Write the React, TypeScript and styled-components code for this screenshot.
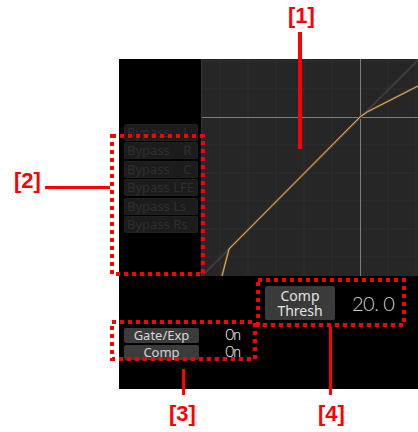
import React from 'react'
import styled, { createGlobalStyle } from 'styled-components'

const GlobalStyle = createGlobalStyle`
  body {
    margin: 0;
    background: #ffffff;
    font-family: "Noto Sans", "DejaVu Sans", sans-serif;
  }
`

const bypassLabels = ['Bypass    L', 'Bypass    R', 'Bypass    C', 'Bypass LFE', 'Bypass Ls', 'Bypass Rs']

// grid spacing is anchored on the crosshair
const crossX = 158
const crossY = 58
const gridXs = [-5, -4, -3, -2, -1, 1, 2].map((k) => crossX + k * 28)
const gridYs = [-2, -1, 1, 2, 3, 4, 5].map((k) => crossY + k * 28)
const curve = '20,217 27,190 158,58 165,53 216,27'

export default function App() {
  return (
    <Page>
      <GlobalStyle />
      <Panel>
        <TopRow>
          <BypassColumn>
            {bypassLabels.map((label) => (
              <BypassButton key={label}>{label}</BypassButton>
            ))}
          </BypassColumn>
          <Graph>
            <svg width="216" height="217" viewBox="0 0 216 217">
              {gridXs.map((x) => (
                <line key={'x' + x} x1={x} y1={0} x2={x} y2={217} stroke="#2f2f2f" strokeWidth="1" />
              ))}
              {gridYs.map((y) => (
                <line key={'y' + y} x1={0} y1={y} x2={216} y2={y} stroke="#2f2f2f" strokeWidth="1" />
              ))}
              <line x1={crossX + 0.5} y1={0} x2={crossX + 0.5} y2={217} stroke="#7e7e7e" strokeWidth="1" />
              <line x1={0} y1={crossY + 0.5} x2={216} y2={crossY + 0.5} stroke="#7e7e7e" strokeWidth="1" />
              <line x1={0} y1={217} x2={216} y2={1} stroke="#3c3c3c" strokeWidth="2" />
              <polyline points={curve} fill="none" stroke="#6e4b25" strokeWidth="2.2" strokeLinejoin="round" />
              <polyline points={curve} fill="none" stroke="#e6bb7c" strokeWidth="0.9" strokeLinejoin="round" />
            </svg>
          </Graph>
        </TopRow>

        <ThreshRow>
          <ThreshButton>
            Comp
            <br />
            Thresh
          </ThreshButton>
          <ThreshValue>20. 0</ThreshValue>
        </ThreshRow>

        <ToggleList>
          <ToggleRow>
            <ToggleButton>Gate/Exp</ToggleButton>
            <ToggleState>On</ToggleState>
          </ToggleRow>
          <ToggleRow>
            <ToggleButton>Comp</ToggleButton>
            <ToggleState>On</ToggleState>
          </ToggleRow>
        </ToggleList>
      </Panel>

      {/* red callouts drawn over the screenshot */}
      <CalloutLabel $x={288} $y={5}>[1]</CalloutLabel>
      <CalloutLabel $x={14} $y={170}>[2]</CalloutLabel>
      <CalloutLabel $x={169} $y={403}>[3]</CalloutLabel>
      <CalloutLabel $x={318} $y={403}>[4]</CalloutLabel>

      <CalloutLine $x={298} $y={32} $w={4} $h={117} />
      <CalloutLine $x={45} $y={186} $w={65} $h={3} />
      <CalloutLine $x={182} $y={369} $w={3} $h={26} />
      <CalloutLine $x={329} $y={327} $w={3} $h={68} />

      <DottedBox $x={110} $y={134} $w={95} $h={142} />
      <DottedBox $x={110} $y={320} $w={147} $h={41} />
      <DottedBox $x={256} $y={278} $w={150} $h={49} />
    </Page>
  )
}

function DottedBox({ $x, $y, $w, $h }: { $x: number, $y: number, $w: number, $h: number }) {
  return (
    <BoxFrame $x={$x} $y={$y} $w={$w} $h={$h}>
      <svg width={$w} height={$h}>
        <rect
          x={2}
          y={2}
          width={$w - 4}
          height={$h - 4}
          fill="none"
          stroke="#ff0000"
          strokeWidth="4"
          strokeDasharray="4 4"
        />
      </svg>
    </BoxFrame>
  )
}

const Page = styled.div`
  position: relative;
  width: 418px;
  height: 432px;
  box-sizing: border-box;
  padding: 59px 0 0 119px;
  overflow: hidden;
`

const Panel = styled.div`
  width: 299px;
  height: 330px;
  background: #000000;
  display: flex;
  flex-direction: column;
`

const TopRow = styled.div`
  display: flex;
  height: 217px;
`

const BypassColumn = styled.div`
  width: 83px;
  box-sizing: border-box;
  padding: 65px 0 0 5px;
  display: flex;
  flex-direction: column;
  gap: 1.4px;
`

const BypassButton = styled.div`
  width: 74px;
  height: 17px;
  box-sizing: border-box;
  padding-left: 2px;
  background: #1c1c1c;
  border: 1px solid #212121;
  border-radius: 2px;
  color: #2f2f2f;
  font-size: 13px;
  line-height: 15px;
  white-space: pre;
  overflow: hidden;
`

const Graph = styled.div`
  width: 216px;
  height: 217px;
  background: #262626;
  border-left: 1px solid #333333;
  svg {
    display: block;
  }
`

const ThreshRow = styled.div`
  display: flex;
  align-items: center;
  gap: 17px;
  padding-left: 146px;
  margin-top: 10px;
`

const ThreshButton = styled.div`
  width: 70px;
  height: 34px;
  background: #3a3a3a;
  border-radius: 2px;
  color: #e2e2e2;
  font-size: 14px;
  line-height: 15px;
  text-align: center;
  display: flex;
  align-items: center;
  justify-content: center;
`

const ThreshValue = styled.div`
  color: #d0d0d0;
  font-family: "Lato", "Noto Sans", sans-serif;
  font-weight: 300;
  font-size: 20px;
  letter-spacing: -0.5px;
`

const ToggleList = styled.div`
  display: flex;
  flex-direction: column;
  gap: 2px;
  padding-left: 5px;
  margin-top: 8px;
`

const ToggleRow = styled.div`
  display: flex;
  align-items: center;
  gap: 26px;
`

const ToggleButton = styled.div`
  width: 75px;
  height: 15px;
  background: #3c3c3c;
  border-radius: 2px;
  color: #d6d6d6;
  font-size: 13px;
  line-height: 15px;
  text-align: center;
`

const ToggleState = styled.div`
  color: #eeeeee;
  font-family: "Roboto", sans-serif;
  font-weight: 300;
  font-size: 14px;
  line-height: 15px;
  letter-spacing: -1.2px;
`

const CalloutLabel = styled.div<{ $x: number, $y: number }>`
  position: absolute;
  left: ${(p) => p.$x}px;
  top: ${(p) => p.$y}px;
  color: #ff0000;
  font-family: "Liberation Sans", Arial, sans-serif;
  font-weight: bold;
  font-size: 22px;
  line-height: 22px;
`

const CalloutLine = styled.div<{ $x: number, $y: number, $w: number, $h: number }>`
  position: absolute;
  left: ${(p) => p.$x}px;
  top: ${(p) => p.$y}px;
  width: ${(p) => p.$w}px;
  height: ${(p) => p.$h}px;
  background: #ff0000;
`

const BoxFrame = styled.div<{ $x: number, $y: number, $w: number, $h: number }>`
  position: absolute;
  left: ${(p) => p.$x}px;
  top: ${(p) => p.$y}px;
  width: ${(p) => p.$w}px;
  height: ${(p) => p.$h}px;
  svg {
    display: block;
  }
`
